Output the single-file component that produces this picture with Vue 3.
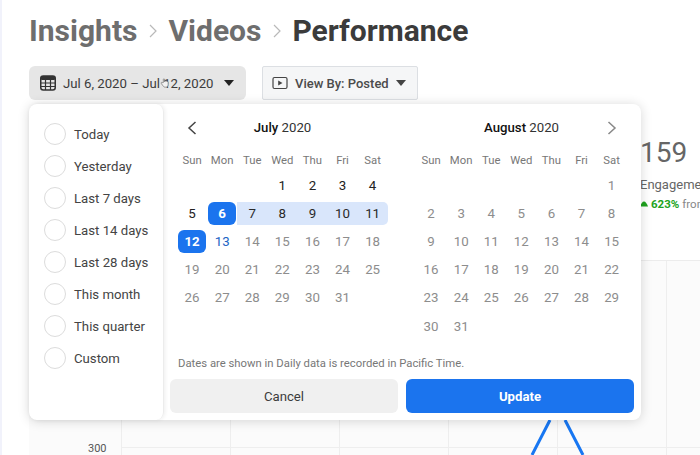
<script setup>
const presets = ['Today', 'Yesterday', 'Last 7 days', 'Last 14 days', 'Last 28 days', 'This month', 'This quarter', 'Custom']
const weekdays = ['Sun', 'Mon', 'Tue', 'Wed', 'Thu', 'Fri', 'Sat']

function buildMonth(blanks, total, extras) {
  const cells = []
  for (let i = 0; i < blanks; i++) cells.push({ key: 'b' + i, label: '', cls: '' })
  for (let d = 1; d <= total; d++) cells.push({ key: d, label: d, cls: extras(d) })
  return cells
}

const july = buildMonth(3, 31, (d) => {
  if (d === 6) return 'start'
  if (d === 12) return 'end'
  if (d === 13) return 'today'
  if (d > 6 && d < 12) return d === 11 ? 'range range-last' : 'range'
  if (d < 6) return 'active'
  return ''
})
const august = buildMonth(6, 31, () => '')
</script>

<template>
  <div class="page">
    <header class="crumbs">
      <span class="crumb">Insights</span>
      <svg class="sep" width="10" height="16" viewBox="0 0 10 16"><path d="M2 2l6 6-6 6" /></svg>
      <span class="crumb">Videos</span>
      <svg class="sep" width="10" height="16" viewBox="0 0 10 16"><path d="M2 2l6 6-6 6" /></svg>
      <span class="crumb current">Performance</span>
    </header>

    <div class="toolbar">
      <button class="date-btn">
        <svg width="16" height="16" viewBox="0 0 16 16" class="cal">
          <rect x="0.75" y="1" width="14.5" height="14" rx="2.5" fill="none" stroke="#333" stroke-width="1.5" />
          <rect x="0.75" y="1" width="14.5" height="4" rx="1.5" fill="#333" />
          <path d="M1 8h14M1 11.5h14M5.5 5v10M10.5 5v10" stroke="#333" stroke-width="1.2" />
        </svg>
        <span class="date-text">Jul 6, 2020 – Jul 12, 2020</span>
        <i class="caret"></i>
        <svg class="cursor" width="10" height="12" viewBox="0 0 12 13">
          <path d="M4 6V2.2c0-1 1.4-1 1.4 0V5l.2-.6c.3-.8 1.4-.6 1.4.2l.2-.2c.4-.6 1.3-.3 1.3.4.4-.4 1.3-.2 1.3.6v2.8c0 1.8-1 3.3-2.8 3.3H6.200C4.800 11.500 4 10.500 3.300 9.500L1.500 7c-.6-.9.500-1.700 1.200-1z" fill="#f2f2f2" stroke="#666" stroke-width="0.8" />
        </svg>
      </button>
      <button class="view-btn">
        <svg width="16" height="14" viewBox="0 0 16 14">
          <rect x="1" y="1.5" width="14" height="11" rx="1.5" fill="none" stroke="#444" stroke-width="1.2" />
          <path d="M6.200 4.400v5.200L10.500 7z" fill="#444" />
        </svg>
        <span>View By: Posted</span>
        <i class="caret small"></i>
      </button>
    </div>

    <section class="stat">
      <div class="stat-num">159</div>
      <div class="stat-label">Engagement</div>
      <div class="stat-delta">
        <svg width="8" height="6" viewBox="0 0 8 6"><path d="M0 5.500C1 2.500 2.500.5 4 .5s3 2 4 5z" fill="#1fa31f" /></svg>
        <b>623%</b> from
      </div>
    </section>

    <section class="chart">
      <svg class="chart-lines" width="671" height="194" viewBox="0 0 671 194">
        <path class="grid" d="M92.500 0v194M201.500 0v194M310.500 0v194M419.500 0v194M528.500 0v194M637.500 0v194M92 186.500h579" />
        <path class="plot" d="M521 159L503 194M536 159L554 194" />
      </svg>
      <span class="axis">300</span>
    </section>

    <div class="popup">
      <aside class="presets">
        <label v-for="p in presets" :key="p" class="preset">
          <i class="radio"></i>
          <span>{{ p }}</span>
        </label>
      </aside>
      <div class="main">
        <div class="months">
          <div class="month">
            <div class="month-head">
              <svg class="nav prev" width="10" height="16" viewBox="0 0 10 16"><path d="M8.500 2L2 8l6.500 6" /></svg>
              <span><b>July</b> 2020</span>
            </div>
            <div class="days">
              <span v-for="w in weekdays" :key="w" class="wd">{{ w }}</span>
              <span v-for="c in july" :key="c.key" class="day" :class="c.cls"><em>{{ c.label }}</em></span>
            </div>
          </div>
          <div class="month">
            <div class="month-head">
              <span><b>August</b> 2020</span>
              <svg class="nav next" width="10" height="16" viewBox="0 0 10 16"><path d="M1.500 2L8 8l-6.500 6" /></svg>
            </div>
            <div class="days">
              <span v-for="w in weekdays" :key="w" class="wd">{{ w }}</span>
              <span v-for="c in august" :key="c.key" class="day"><em>{{ c.label }}</em></span>
            </div>
          </div>
        </div>
        <p class="note">Dates are shown in Daily data is recorded in Pacific Time.</p>
        <div class="actions">
          <button class="cancel">Cancel</button>
          <button class="update">Update</button>
        </div>
      </div>
    </div>
  </div>
</template>

<style>
html, body { margin: 0; background: #fff; }
</style>

<style scoped>
.page {
  position: relative;
  width: 700px;
  height: 455px;
  overflow: hidden;
  background: #fff;
  font-family: Roboto, "Liberation Sans", sans-serif;
  box-shadow: inset 2px 0 0 #f1f2fb;
}
button { font-family: inherit; cursor: pointer; }
.crumbs {
  display: flex;
  align-items: center;
  height: 38px;
  padding: 12px 0 0 29px;
}
.crumb { font-size: 30px; font-weight: 700; color: #6e6e6e; line-height: 38px; }
.crumb.current { color: #3b3b3b; }
.sep { margin: 0 10px 0 11px; }
.sep path { fill: none; stroke: #b9b9b9; stroke-width: 1.2; }
.toolbar { display: flex; gap: 16px; padding: 16px 0 0 29px; }
.date-btn {
  position: relative;
  display: flex;
  align-items: center;
  width: 217px;
  height: 34px;
  padding: 0 0 0 11px;
  border: 0;
  border-radius: 6px;
  background: #e6e6e6;
  font-size: 13.200px;
  color: #3c3c3c;
}
.date-text { white-space: nowrap; }
.cal { margin-right: 7px; flex: none; }
.cursor { position: absolute; left: 131px; top: 11px; }
.caret {
  margin-left: 10px;
  border: 5px solid transparent;
  border-top: 6px solid #222;
  border-bottom: 0;
}
.view-btn {
  display: flex;
  align-items: center;
  width: 156px;
  height: 34px;
  padding: 0 0 0 9px;
  border: 1px solid #dcdfe3;
  border-radius: 2px;
  background: #f5f6f7;
  font-size: 13px;
  font-weight: 500;
  color: #4b4b4b;
}
.view-btn span { margin-left: 7px; }
.caret.small { margin-left: 7px; border-top-color: #444; }
.stat {
  margin: 34px 0 0 640px;
  width: 60px;
  overflow: hidden;
  white-space: nowrap;
}
.stat-num { font-size: 28px; line-height: 38px; color: #666; }
.stat-label { margin-top: 4px; font-size: 13px; line-height: 18px; color: #666; }
.stat-delta { margin-top: 2px; font-size: 11.500px; line-height: 16px; color: #888; display: flex; align-items: center; gap: 3px; }
.stat-delta svg { flex: none; }
.stat-delta b { color: #22a322; }
.chart {
  position: absolute;
  left: 29px;
  top: 260px;
  width: 671px;
  height: 195px;
  background: #fbfbfb;
  border-top: 1px solid #ececec;
}
.chart-lines { display: block; }
.grid { fill: none; stroke: #eeeeee; stroke-width: 1; }
.plot { fill: none; stroke: #1877f2; stroke-width: 3; }
.axis { position: absolute; left: 59px; top: 181px; font-size: 11px; line-height: 13px; color: #555; }
.popup {
  position: absolute;
  left: 29px;
  top: 104px;
  display: flex;
  width: 612px;
  height: 316px;
  border-radius: 8px;
  background: #fff;
  box-shadow: 0 1px 12px rgba(0, 0, 0, 0.16);
}
.presets {
  width: 135px;
  flex: none;
  box-sizing: border-box;
  padding-top: 18px;
  border-right: 1px solid #ececec;
  border-radius: 8px;
  box-shadow: 1px 0 4px rgba(0, 0, 0, 0.07);
  display: flex;
  flex-direction: column;
  gap: 8px;
}
.preset {
  display: flex;
  align-items: center;
  height: 24px;
  padding-left: 15px;
  font-size: 13.200px;
  color: #444;
}
.radio {
  width: 22px;
  height: 22px;
  flex: none;
  box-sizing: border-box;
  margin-right: 8px;
  border: 1.500px solid #dcdcdc;
  border-radius: 50%;
  background: #fff;
}
.main { flex: 1; display: flex; flex-direction: column; padding: 0 7px 7px 6px; min-width: 0; }
.months { display: flex; height: 252px; padding: 0 0 0 7px; gap: 28px; }
.month { width: 211px; }
.month-head {
  position: relative;
  height: 24px;
  padding-top: 12px;
  line-height: 24px;
  text-align: center;
  font-size: 13.200px;
  color: #333;
}
.month-head b { font-weight: 500; color: #111; }
.nav { position: absolute; top: 16px; }
.nav path { fill: none; stroke-width: 1.500; }
.prev { left: 10px; }
.prev path { stroke: #444; }
.next { right: 10px; }
.next path { stroke: #888; }
.days {
  display: grid;
  grid-template-columns: repeat(7, 30.100px);
  grid-template-rows: 21px;
  grid-auto-rows: 28.200px;
  margin-top: 10px;
}
.wd {
  display: flex;
  align-items: center;
  justify-content: center;
  height: 20px;
  font-size: 11.300px;
  color: #777;
  align-self: start;
}
.day {
  display: flex;
  align-items: center;
  justify-content: center;
  font-size: 13.300px;
  color: #8d8d8d;
}
.day em {
  font-style: normal;
  display: flex;
  align-items: center;
  justify-content: center;
  width: 100%;
  height: 23px;
}
.day.active { color: #222; }
.day.today { color: #1c64c4; }
.day.range { color: #2a2a2a; }
.day.range em { background: #d9e6fb; }
.day.range-last em { border-radius: 0 5px 5px 0; }
.day.start, .day.end { color: #fff; font-weight: 700; }
.day.start em, .day.end em { width: 28px; background: #1b74ee; border-radius: 6px; }
.note { margin: 0 0 0 8px; font-size: 11.300px; line-height: 16px; color: #777; white-space: nowrap; }
.actions { display: flex; gap: 8px; margin-top: 7px; }
.actions button {
  flex: 1;
  height: 34px;
  border: 0;
  border-radius: 6px;
  font-size: 13.200px;
}
.cancel { background: #f0f0f0; color: #3c3c3c; }
.update { background: #1b74ee; color: #fff; font-weight: 700; }
</style>
